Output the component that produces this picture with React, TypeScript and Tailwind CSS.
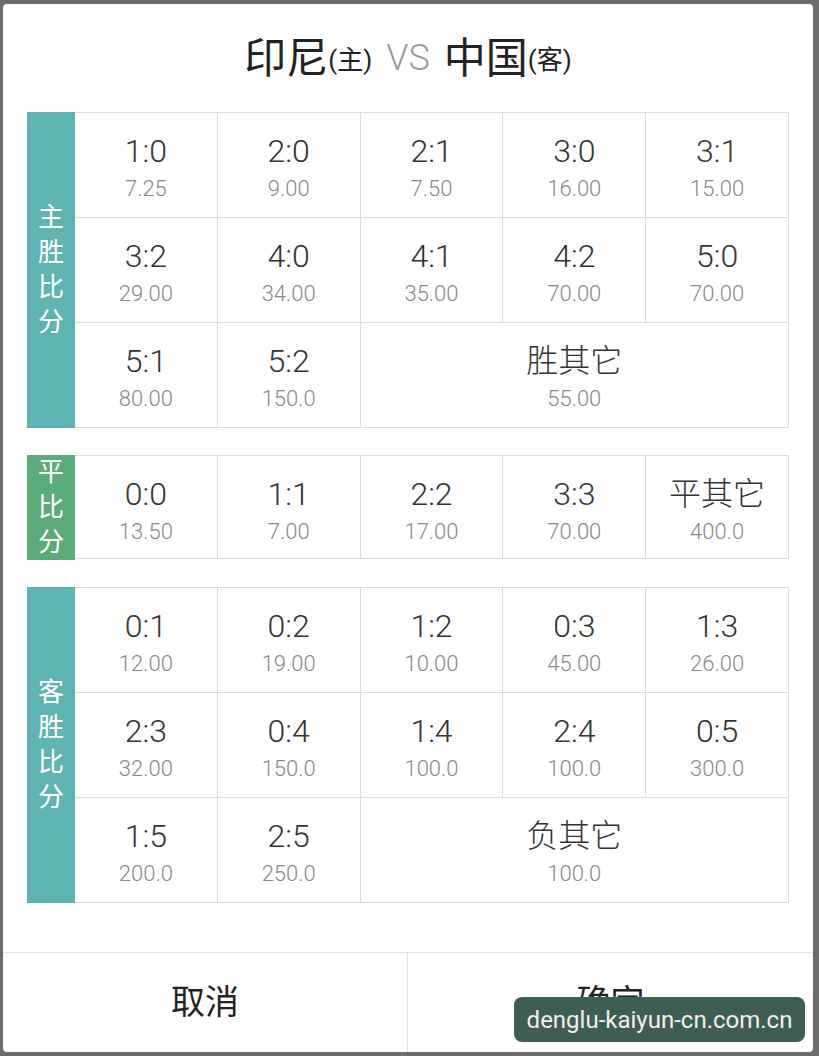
import React from 'react';

type Cell = { score: string; odds: string; span?: number };

const homeWin: Cell[] = [
  { score: '1:0', odds: '7.25' },
  { score: '2:0', odds: '9.00' },
  { score: '2:1', odds: '7.50' },
  { score: '3:0', odds: '16.00' },
  { score: '3:1', odds: '15.00' },
  { score: '3:2', odds: '29.00' },
  { score: '4:0', odds: '34.00' },
  { score: '4:1', odds: '35.00' },
  { score: '4:2', odds: '70.00' },
  { score: '5:0', odds: '70.00' },
  { score: '5:1', odds: '80.00' },
  { score: '5:2', odds: '150.0' },
  { score: '胜其它', odds: '55.00', span: 3 },
];

const draw: Cell[] = [
  { score: '0:0', odds: '13.50' },
  { score: '1:1', odds: '7.00' },
  { score: '2:2', odds: '17.00' },
  { score: '3:3', odds: '70.00' },
  { score: '平其它', odds: '400.0' },
];

const awayWin: Cell[] = [
  { score: '0:1', odds: '12.00' },
  { score: '0:2', odds: '19.00' },
  { score: '1:2', odds: '10.00' },
  { score: '0:3', odds: '45.00' },
  { score: '1:3', odds: '26.00' },
  { score: '2:3', odds: '32.00' },
  { score: '0:4', odds: '150.0' },
  { score: '1:4', odds: '100.0' },
  { score: '2:4', odds: '100.0' },
  { score: '0:5', odds: '300.0' },
  { score: '1:5', odds: '200.0' },
  { score: '2:5', odds: '250.0' },
  { score: '负其它', odds: '100.0', span: 3 },
];

const font = { fontFamily: 'Roboto, "Noto Sans CJK SC", sans-serif' };

function Section({ label, color, cells, rowH }: { label: string[]; color: string; cells: Cell[]; rowH: string }) {
  return (
    <div className="flex">
      {/* 左侧标签 */}
      <div className={`w-[48px] flex flex-col items-center justify-center text-white text-[26px] leading-[35px] ${color}`}>
        {label.map((c) => (
          <span key={c}>{c}</span>
        ))}
      </div>
      {/* 比分格子 */}
      <div className="flex-1 grid grid-cols-5 border-t border-[#dcdcdc]">
        {cells.map((cell) => (
          <div
            key={cell.score}
            className={`${rowH} ${cell.span === 3 ? 'col-span-3' : ''} border-r border-b border-[#dcdcdc] flex flex-col items-center pt-[18px]`}
          >
            <span className="text-[32px] leading-[40px] font-light text-[#333]">{cell.score}</span>
            <span className="text-[22px] leading-[32px] mt-[2px] font-light text-[#888]">{cell.odds}</span>
          </div>
        ))}
      </div>
    </div>
  );
}

export default function App() {
  return (
    <div className="w-[819px] h-[1056px] bg-[#6b6b6b] pt-[4px] pl-[3px] overflow-hidden relative" style={font}>
      <div className="w-[810px] h-[1048px] bg-white rounded-[4px] flex flex-col">
        {/* 标题 */}
        <div className="h-[108px] flex items-center justify-center text-[#222]">
          <span className="text-[42px]">印尼</span>
          <span className="text-[26px] mt-[4px]">(主)</span>
          <span className="text-[36px] font-light text-[#9a9a9a] mx-[14px]">VS</span>
          <span className="text-[42px]">中国</span>
          <span className="text-[26px] mt-[4px]">(客)</span>
        </div>

        <div className="px-[24px] flex flex-col gap-[27px]">
          <Section label={['主', '胜', '比', '分']} color="bg-[#5fb4b1]" cells={homeWin} rowH="h-[105px]" />
          <Section label={['平', '比', '分']} color="bg-[#5cab7a]" cells={draw} rowH="h-[103px]" />
          <Section label={['客', '胜', '比', '分']} color="bg-[#5fb4b1]" cells={awayWin} rowH="h-[105px]" />
        </div>

        {/* 底部按钮 */}
        <div className="mt-auto h-[100px] border-t border-[#e2e2e2] flex">
          <button className="w-[405px] border-r border-[#e2e2e2] text-[34px] text-[#222]">取消</button>
          <button className="flex-1 text-[34px] text-[#222]">确定</button>
        </div>
      </div>

      {/* 水印 */}
      <div className="absolute left-[514px] top-[997px] w-[291px] h-[45px] rounded-[8px] bg-[#3e5d53] flex items-center justify-center text-[24px] text-[#f0f0f0]">
        denglu-kaiyun-cn.com.cn
      </div>
    </div>
  );
}
